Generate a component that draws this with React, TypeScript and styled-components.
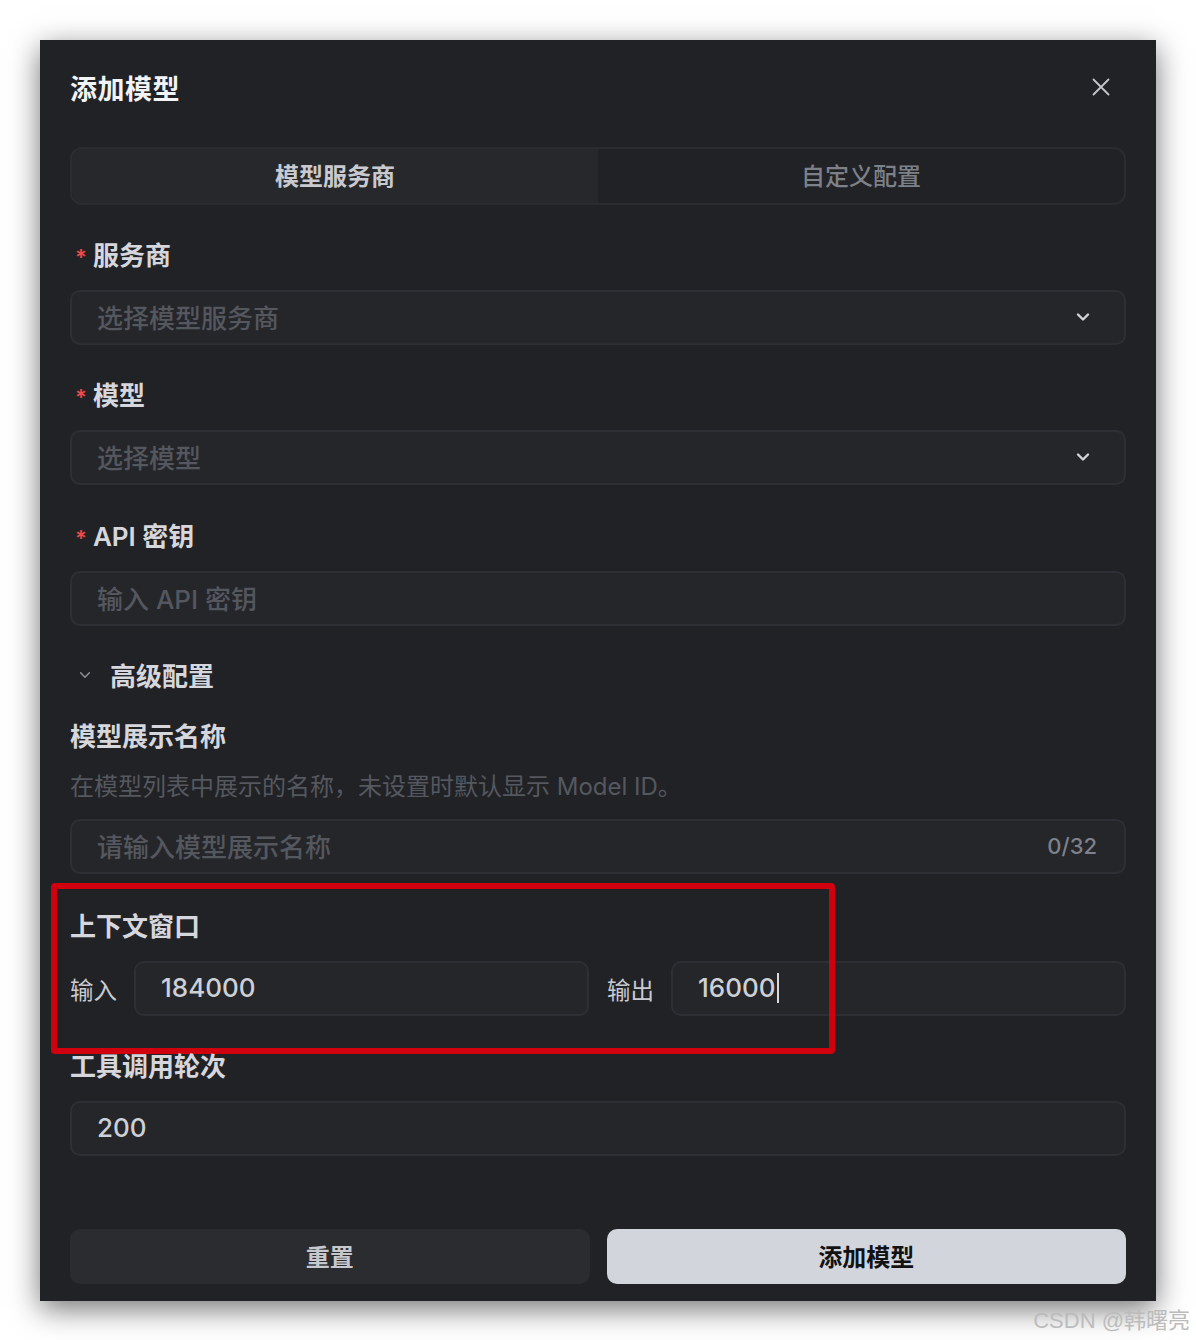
import React from "react";
import styled, { createGlobalStyle } from "styled-components";

const GlobalStyle = createGlobalStyle`
  html, body {
    margin: 0;
    padding: 0;
    background: #ffffff;
  }
  body {
    font-family: Inter, "Noto Sans CJK SC", sans-serif;
  }
  * {
    box-sizing: border-box;
  }
`;

const Page = styled.div`
  position: relative;
  width: 1196px;
  height: 1340px;
  padding: 40px;
  background: #ffffff;
`;

const Dialog = styled.div`
  width: 1116px;
  background: #212226;
  box-shadow: 0 8px 28px rgba(0, 0, 0, 0.55);
  padding: 27px 30px 17px;
  display: flex;
  flex-direction: column;

  & > * {
    flex-shrink: 0;
  }
`;

const Header = styled.div`
  height: 40px;
  display: flex;
  align-items: center;
  justify-content: space-between;
`;

const Title = styled.h2`
  margin: 0;
  font-size: 27px;
  font-weight: 700;
  color: #f2f3f5;
  letter-spacing: 0.5px;
`;

const CloseButton = styled.button`
  width: 40px;
  height: 40px;
  margin-right: 5px;
  display: flex;
  align-items: center;
  justify-content: center;
  border: none;
  background: transparent;
  padding: 0;
  cursor: pointer;
`;

const Tabs = styled.div`
  margin-top: 40px;
  height: 58px;
  display: grid;
  grid-template-columns: 1fr 1fr;
  border: 2px solid #2b2c30;
  border-radius: 12px;
  overflow: hidden;
`;

const Tab = styled.div<{ $active?: boolean }>`
  display: flex;
  align-items: center;
  justify-content: center;
  padding-bottom: 4px;
  font-size: 24px;
  font-weight: ${(p) => (p.$active ? 700 : 500)};
  color: ${(p) => (p.$active ? "#c8cad0" : "#7e8088")};
  background: ${(p) => (p.$active ? "#27282c" : "transparent")};
`;

const Field = styled.div<{ $gap?: number }>`
  position: relative;
  margin-top: ${(p) => p.$gap ?? 33}px;
  display: flex;
  flex-direction: column;
  gap: 16px;
`;

/* the CJK face sits low in its box, so nudge the glyphs up */
const Label = styled.div`
  height: 36px;
  padding-bottom: 5px;
  display: flex;
  align-items: center;
  font-size: 26px;
  font-weight: 600;
  color: #d6d7dc;
`;

const Required = styled.span`
  color: #f04a4a;
  font-size: 22px;
  margin: 6px 6px 0 5px;
`;

const Hint = styled.div`
  line-height: 32px;
  font-size: 24px;
  color: #55585f;
`;

const InputBox = styled.div`
  height: 55px;
  flex-shrink: 0;
  display: flex;
  align-items: center;
  justify-content: space-between;
  padding: 0 24px 2px 25px;
  background: #25262a;
  border: 2px solid #2e2f34;
  border-radius: 10px;
`;

const SelectBox = styled(InputBox)`
  padding-right: 33px;
`;

const SplitInput = styled(InputBox)`
  flex: 1;
  min-width: 0;
`;

const Placeholder = styled.span`
  font-size: 26px;
  font-weight: 500;
  color: #54575e;
`;

const Value = styled.span`
  font-size: 26px;
  font-weight: 500;
  color: #cdd0d6;
  display: flex;
  align-items: center;
`;

const Caret = styled.span`
  display: inline-block;
  width: 2px;
  height: 30px;
  margin-left: 1px;
  background: #d8dade;
`;

const Counter = styled.span`
  font-size: 22px;
  font-weight: 500;
  color: #7e818a;
  margin-right: 3px;
`;

const AdvancedToggle = styled.div`
  margin-top: 33px;
  height: 36px;
  padding: 0 0 5px 8px;
  display: flex;
  align-items: center;
  gap: 18px;
  font-size: 26px;
  font-weight: 600;
  color: #d6d7dc;
`;

const SplitRow = styled.div`
  display: grid;
  grid-template-columns: 1fr 1fr;
  gap: 18px;
`;

const SplitGroup = styled.div`
  display: flex;
  align-items: center;
  gap: 17px;
`;

const SplitLabel = styled.span`
  font-size: 23.5px;
  color: #c9cbd1;
  white-space: nowrap;
`;

const Highlight = styled.div`
  position: absolute;
  top: -26px;
  left: -19px;
  width: 784px;
  height: 171px;
  border: 6px solid #d0000f;
  border-radius: 4px;
  pointer-events: none;
`;

const Footer = styled.div`
  margin-top: 73px;
  display: grid;
  grid-template-columns: 1fr 1fr;
  gap: 17px;
`;

const Button = styled.button<{ $primary?: boolean }>`
  height: 55px;
  padding-bottom: 3px;
  border: none;
  border-radius: 10px;
  font-family: inherit;
  font-size: 24px;
  font-weight: 700;
  color: ${(p) => (p.$primary ? "#111214" : "#c6c8ce")};
  background: ${(p) => (p.$primary ? "#d3d5dd" : "#2b2c30")};
  cursor: pointer;
`;

const Watermark = styled.div`
  position: absolute;
  right: 6px;
  bottom: 6px;
  font-family: "Liberation Sans", "Noto Sans CJK SC", sans-serif;
  font-size: 22px;
  color: #bcbcbc;
`;

const Chevron = ({ size = 16, color = "#d3d4d8", width = 2.4 }) => (
  <svg width={size} height={size} viewBox="0 0 16 16" fill="none">
    <polyline
      points="3,5.5 8,10.5 13,5.5"
      stroke={color}
      strokeWidth={width}
      strokeLinecap="round"
      strokeLinejoin="round"
    />
  </svg>
);

const SelectField = ({ label, placeholder }: { label: string; placeholder: string }) => (
  <Field>
    <Label>
      <Required>*</Required>
      {label}
    </Label>
    <SelectBox>
      <Placeholder>{placeholder}</Placeholder>
      <Chevron />
    </SelectBox>
  </Field>
);

export default function App() {
  return (
    <Page>
      <GlobalStyle />
      <Dialog>
        <Header>
          <Title>添加模型</Title>
          <CloseButton aria-label="close">
            <svg width="18" height="18" viewBox="0 0 18 18">
              <path
                d="M1.5 1.5 L16.5 16.5 M16.5 1.5 L1.5 16.5"
                stroke="#c5c6cb"
                strokeWidth="1.8"
                strokeLinecap="round"
              />
            </svg>
          </CloseButton>
        </Header>

        <Tabs>
          <Tab $active>模型服务商</Tab>
          <Tab>自定义配置</Tab>
        </Tabs>

        <SelectField label="服务商" placeholder="选择模型服务商" />
        <SelectField label="模型" placeholder="选择模型" />

        <Field $gap={34}>
          <Label>
            <Required>*</Required>
            API 密钥
          </Label>
          <InputBox>
            <Placeholder>输入 API 密钥</Placeholder>
          </InputBox>
        </Field>

        <AdvancedToggle>
          <Chevron size={14} color="#8b8d94" width={1.8} />
          高级配置
        </AdvancedToggle>

        <Field $gap={24}>
          <Label>模型展示名称</Label>
          <Hint>在模型列表中展示的名称，未设置时默认显示 Model ID。</Hint>
          <InputBox>
            <Placeholder>请输入模型展示名称</Placeholder>
            <Counter>0/32</Counter>
          </InputBox>
        </Field>

        <Field $gap={35}>
          <Label>上下文窗口</Label>
          <SplitRow>
            <SplitGroup>
              <SplitLabel>输入</SplitLabel>
              <SplitInput>
                <Value>184000</Value>
              </SplitInput>
            </SplitGroup>
            <SplitGroup>
              <SplitLabel>输出</SplitLabel>
              <SplitInput>
                <Value>
                  16000
                  <Caret />
                </Value>
              </SplitInput>
            </SplitGroup>
          </SplitRow>
          <Highlight />
        </Field>

        <Field $gap={33}>
          <Label>工具调用轮次</Label>
          <InputBox>
            <Value>200</Value>
          </InputBox>
        </Field>

        <Footer>
          <Button>重置</Button>
          <Button $primary>添加模型</Button>
        </Footer>
      </Dialog>
      <Watermark>CSDN @韩曙亮</Watermark>
    </Page>
  );
}
